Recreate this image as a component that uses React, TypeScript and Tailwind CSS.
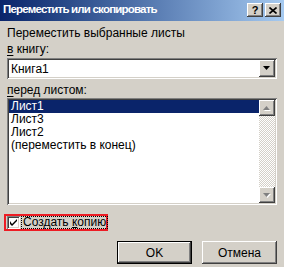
import React from "react";

const raised =
  "shadow-[inset_-1px_-1px_#404040,inset_1px_1px_#ffffff,inset_-2px_-2px_#808080,inset_2px_2px_#d4d0c8]";
const sunken =
  "shadow-[inset_1px_1px_#808080,inset_-1px_-1px_#ffffff,inset_2px_2px_#404040,inset_-2px_-2px_#d4d0c8]";

function Arrow({ down = true, color = "#000", shadow = false }: { down?: boolean; color?: string; shadow?: boolean }) {
  const pts = down ? "0,0 7,0 3.5,4" : "3.5,0 7,4 0,4";
  return (
    <svg width="8" height="5" viewBox="0 0 8 5" className="block">
      {shadow && <polygon points={down ? "1,1 8,1 4.5,5" : "4.5,1 8,5 1,5"} fill="#ffffff" />}
      <polygon points={pts} fill={color} />
    </svg>
  );
}

function ScrollButton({ down }: { down: boolean }) {
  return (
    <div className={`flex h-4 w-4 items-center justify-center bg-[#d4d0c8] ${raised}`}>
      <Arrow down={down} color="#808080" shadow />
    </div>
  );
}

export default function App() {
  const rows = ["Лист1", "Лист3", "Лист2", "(переместить в конец)"];
  return (
    <div className="h-[267px] w-[284px] overflow-hidden bg-[#d4d0c8] font-['Liberation_Sans',Arial,sans-serif] text-[12px] text-black">
      <div className="flex h-[21px] items-start justify-between bg-gradient-to-r from-[#0a246a] to-[#a6caf0] pl-[3px] pr-[3px]">
        <span className="mt-[3px] whitespace-nowrap text-[11.5px] font-bold leading-[13px] tracking-[-0.8px] text-white">
          Переместить или скопировать
        </span>
        <div className="mt-[3px] flex gap-[2px]">
          <div className={`flex h-[14px] w-4 items-center justify-center bg-[#d4d0c8] text-[11px] font-bold leading-none ${raised}`}>?</div>
          <div className={`flex h-[14px] w-4 items-center justify-center bg-[#d4d0c8] ${raised}`}>
            <svg width="8" height="7" viewBox="0 0 8 7">
              <path d="M0.5 0.5 L7.5 6.5 M7.5 0.5 L0.5 6.5" stroke="#000" strokeWidth="1.6" />
            </svg>
          </div>
        </div>
      </div>

      <div className="px-[7px]">
        <p className="mt-[4px] leading-[16px]">Переместить выбранные листы</p>
        <p className="leading-[16px]">
          <u className="underline-offset-2">в</u> книгу:
        </p>

        <div className={`mt-[1px] flex h-[21px] w-[270px] items-center bg-white p-[2px] ${sunken}`}>
          <span className="flex-1 pl-[2px] leading-none">Книга1</span>
          <div className={`flex h-[17px] w-4 items-center justify-center bg-[#d4d0c8] ${raised}`}>
            <Arrow />
          </div>
        </div>

        <p className="mt-[3px] leading-[16px]">
          <u className="underline-offset-2">п</u>еред листом:
        </p>

        <div className={`flex h-[107px] w-[270px] bg-white p-[2px] ${sunken}`}>
          <ul className="flex-1">
            {rows.map((r, i) => (
              <li
                key={r}
                className={`h-[13px] pl-[2px] leading-[13px] ${i === 0 ? "bg-[#0a246a] text-white" : ""}`}
              >
                {r}
              </li>
            ))}
          </ul>
          <div className="flex w-4 flex-col justify-between bg-[repeating-conic-gradient(#ffffff_0_25%,#d4d0c8_0_50%)] bg-[length:2px_2px]">
            <ScrollButton down={false} />
            <ScrollButton down />
          </div>
        </div>
      </div>

      <div className="ml-[4px] mt-[9px] flex h-[17px] w-[104px] items-center border-2 border-[#ed1c24] pl-[1px]">
        <div className={`flex h-[13px] w-[13px] shrink-0 items-center justify-center bg-white ${sunken}`}>
          <svg width="7" height="7" viewBox="0 0 7 7">
            <path d="M0 2 L0 5 L2 7 L7 2 L7 0 L2 5 Z" fill="#000" />
          </svg>
        </div>
        <span className="ml-[1px] whitespace-nowrap border border-dotted border-black px-[1px] leading-[11px]">
          Создать <u className="underline-offset-1">к</u>опию
        </span>
      </div>

      <div className="mt-[10px] flex justify-end gap-[10px] pr-[7px]">
        <button className={`h-[23px] w-[75px] border border-black bg-[#d4d0c8] ${raised}`}>OK</button>
        <button className={`h-[23px] w-[75px] bg-[#d4d0c8] ${raised}`}>Отмена</button>
      </div>
    </div>
  );
}
